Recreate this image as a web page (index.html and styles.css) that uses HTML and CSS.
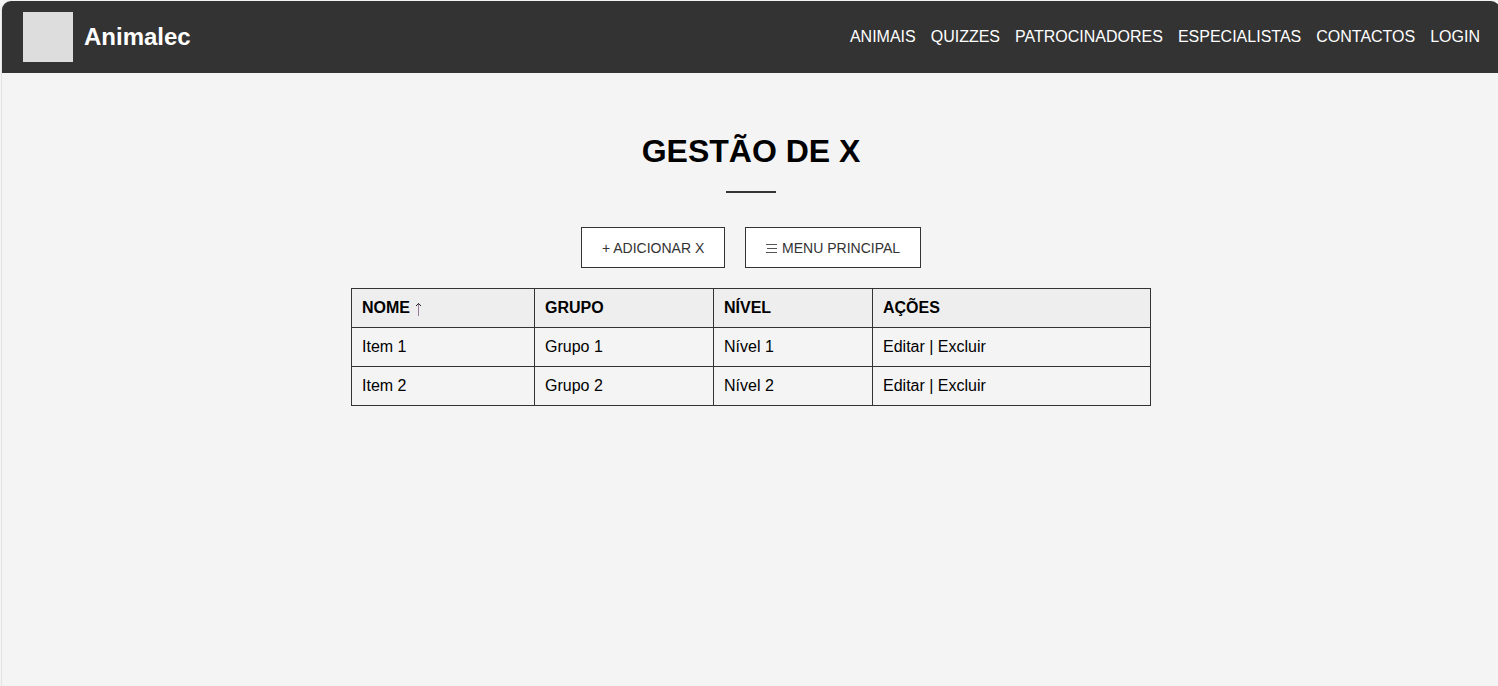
FILE: index.html
```html
<!DOCTYPE html>
<html lang="pt">
<head>
<meta charset="utf-8">
<title>Animalec</title>
<link rel="stylesheet" href="styles.css">
</head>
<body>
<div class="shell">
  <header class="header">
    <div class="brand">
      <div class="logo"></div>
      <span class="brand-name">Animalec</span>
    </div>
    <nav class="nav">
      <a href="#">ANIMAIS</a>
      <a href="#">QUIZZES</a>
      <a href="#">PATROCINADORES</a>
      <a href="#">ESPECIALISTAS</a>
      <a href="#">CONTACTOS</a>
      <a href="#">LOGIN</a>
    </nav>
  </header>
  <main class="content">
    <h1 class="title">GESTÃO DE X</h1>
    <div class="rule"></div>
    <div class="actions">
      <button class="button" type="button">+ ADICIONAR X</button>
      <button class="button" type="button"><svg class="menu-icon" viewBox="0 0 12 11" aria-hidden="true"><path d="M0 1.5h11M1 5.5h10M0 9.5h11"/></svg> MENU PRINCIPAL</button>
    </div>
    <table class="table">
      <colgroup><col class="col-name"><col class="col-group"><col class="col-level"><col></colgroup>
      <thead>
        <tr>
          <th>NOME <svg class="sort-icon" viewBox="0 0 8 14" aria-hidden="true"><path class="shaft" d="M4.5 1v13"/><path class="head" d="M2 4L4.500 1.500L7 4"/></svg></th>
          <th>GRUPO</th><th>NÍVEL</th><th>AÇÕES</th>
        </tr>
      </thead>
      <tbody>
        <tr><td>Item 1</td><td>Grupo 1</td><td>Nível 1</td><td><a href="#">Editar</a> | <a href="#">Excluir</a></td></tr>
        <tr><td>Item 2</td><td>Grupo 2</td><td>Nível 2</td><td><a href="#">Editar</a> | <a href="#">Excluir</a></td></tr>
      </tbody>
    </table>
  </main>
</div>
</body>
</html>
```
FILE: styles.css
```css
* { box-sizing: border-box; }
html { overflow: hidden; }
body {
  margin: 0;
  padding: 1px 0 0 1px;
  background: #f4f4f4;
  font-family: "Liberation Sans", Arial, sans-serif;
  font-size: 16px;
  line-height: 18px;
  color: #000;
}
a { color: inherit; text-decoration: none; }
/* The window frame runs slightly past the right edge. */
.shell {
  margin-right: -2px;
  min-height: calc(100vh - 1px);
  border-left: 1px solid #e4e4e4;
  border-radius: 9px 9px 0 0;
  background: #f4f4f4;
}
.header {
  display: flex;
  align-items: center;
  justify-content: space-between;
  padding: 11px 20px 11px 21px;
  border-radius: 9px 9px 0 0;
  background: #333;
  color: #fff;
}
.brand { display: flex; align-items: center; gap: 11px; }
.logo { width: 50px; height: 50px; background: #ddd; }
.brand-name { font-size: 24px; font-weight: bold; line-height: 28px; }
.nav { display: flex; gap: 15px; }
.content {
  display: flex;
  flex-direction: column;
  align-items: center;
  padding: 60px 20px 20px;
}
.title { margin: 0; font-size: 32px; line-height: 36px; }
.rule { width: 50px; height: 2px; margin: 22px 0 34px; background: #333; }
.actions { display: flex; gap: 20px; margin-bottom: 20px; }
.button {
  padding: 12px 20px 11px;
  border: 1px solid #333;
  border-radius: 0;
  background: #fff;
  color: #333;
  font-family: inherit;
  font-size: 14px;
  line-height: 16px;
}
.menu-icon { width: 12px; height: 11px; vertical-align: -1px; fill: none; stroke: #555; }
.table { width: 100%; max-width: 800px; border-collapse: collapse; table-layout: fixed; }
.col-name { width: 183px; }
.col-group { width: 179px; }
.col-level { width: 159px; }
.table th, .table td { padding: 10px; border: 1px solid #333; text-align: left; }
.table th { background: #eee; }
.sort-icon { width: 8px; height: 14px; vertical-align: -3px; fill: none; }
.shaft { stroke: #967a96; }
.head { stroke: #222; }
```
